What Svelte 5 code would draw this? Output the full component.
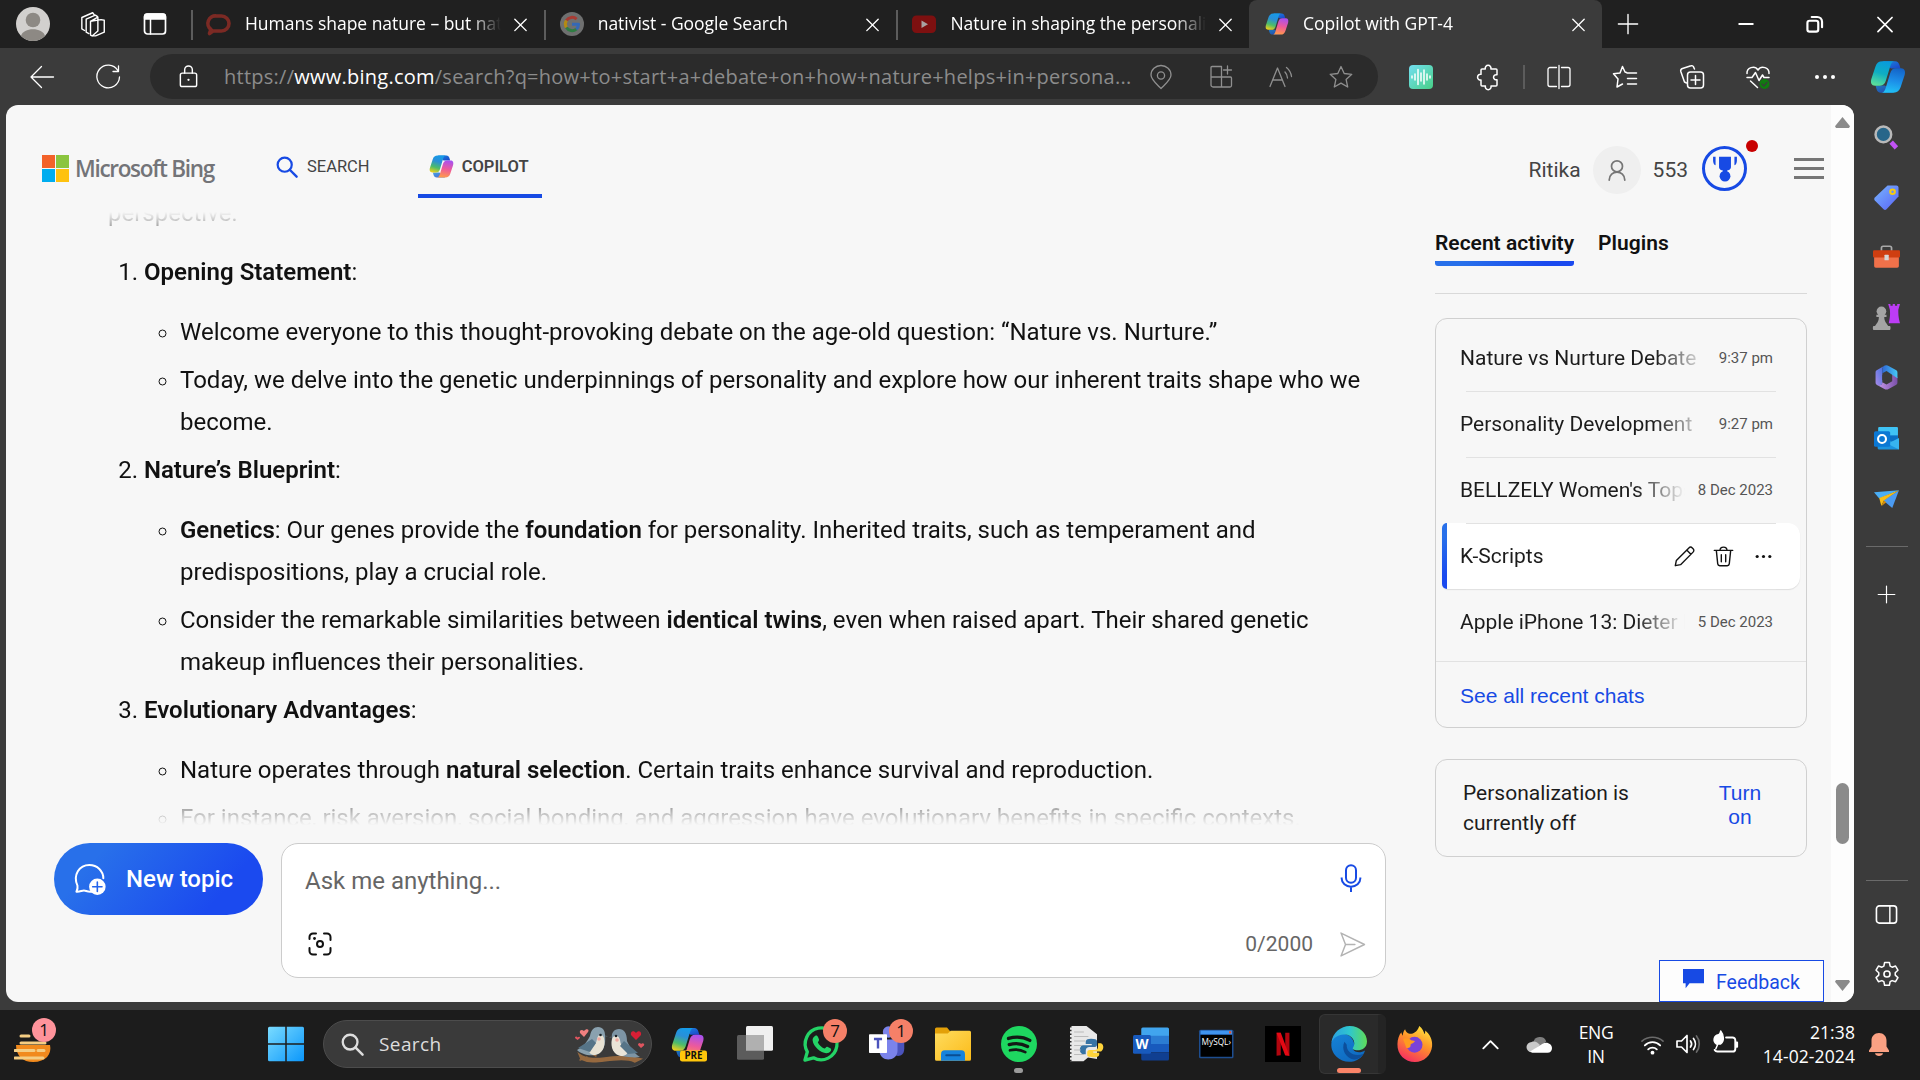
<script>
  const tabs = [
    { title: 'Humans shape nature – but nature shapes us', icon: 'chat' },
    { title: 'nativist - Google Search', icon: 'google' },
    { title: 'Nature in shaping the personality', icon: 'youtube' },
    { title: 'Copilot with GPT-4', icon: 'copilot', active: true },
  ];
  const chats = [
    { title: 'Nature vs Nurture Debate', when: '9:37 pm' },
    { title: 'Personality Development', when: '9:27 pm' },
    { title: "BELLZELY Women's Tops", when: '8 Dec 2023' },
    { title: 'K-Scripts', selected: true },
    { title: 'Apple iPhone 13: Dieter Bohn', when: '5 Dec 2023' },
  ];
  const addressIcons = ['pin', 'apps', 'read', 'star'];
  const toolIcons = ['split', 'favorites', 'collections', 'health', 'dots'];
  const sideIcons = ['lens', 'tag', 'toolbox', 'games', 'm365', 'outlook', 'drop'];
  const taskIcons = [
    { name: 'copilotpre' },
    { name: 'taskview' },
    { name: 'whatsapp', badge: '7' },
    { name: 'teams', badge: '1' },
    { name: 'folder' },
    { name: 'spotify', dot: true },
    { name: 'python' },
    { name: 'word' },
    { name: 'mysql' },
    { name: 'netflix' },
    { name: 'edge', active: true },
    { name: 'firefox' },
  ];
</script>

{#snippet ribbon(a, b, c)}
  <path fill="url(#{c})" d="M8.500 1.500h8.200c1.600 0 2.500 1 2.900 2.400l.7 2.400H14z" />
  <path fill="url(#{c})" d="M15.500 22.500H7.300c-1.600 0-2.500-1-2.900-2.400l-.7-2.400H10z" opacity=".8" />
  <path fill="url(#{a})" d="M8.300 1.500h7.900c-1.600.2-2.200 1.600-2.700 3.300l-2.900 9.600c-.7 2.200-1.700 3.400-4 3.400H3.400C.9 17.800.2 15.800.9 13.300L3.600 5.100C4.400 2.700 5.800 1.500 8.300 1.500z" />
  <path fill="url(#{b})" d="M15.700 22.500H7.800c1.600-.2 2.200-1.600 2.700-3.300l2.900-9.600c.7-2.200 1.700-3.400 4-3.400h3.200c2.500 0 3.200 2 2.500 4.500l-2.700 8.200c-.8 2.400-2.200 3.600-4.700 3.600z" />
{/snippet}

{#snippet icon(name, size = 24)}
  <svg class="icon" width={size} height={size} viewBox="0 0 24 24" fill="none" stroke="currentColor" stroke-width="1.3" stroke-linecap="round" stroke-linejoin="round" aria-hidden="true">
    {#if name === 'copilot'}
      <g stroke="none">{@render ribbon('gCool', 'gWarm', 'gDeep')}</g>
    {:else if name === 'copilotblue'}
      <g stroke="none">{@render ribbon('gTeal', 'gSky', 'gDeep')}</g>
    {:else if name === 'copilotpre'}
      <g stroke="none">
        <g transform="scale(.93)">{@render ribbon('gCool', 'gWarm', 'gDeep')}</g>
        <rect x="6" y="16.300" width="18" height="7.400" rx="1.500" fill="#ffc60b" />
        <text x="15" y="22.300" class="pre" text-anchor="middle">PRE</text>
      </g>
    {:else if name === 'chat'}
      <path stroke="#7c2a24" stroke-width="3.600" d="M9.500 4h5a7.500 7.500 0 0 1 0 15H6l-3.500 2.500L4 17.500A7.500 7.500 0 0 1 9.500 4z" />
    {:else if name === 'google'}
      <g stroke="none"><circle cx="12" cy="12" r="12" fill="#6f7070" /></g>
      <g stroke-width="3" stroke-linecap="butt">
        <path stroke="#a93b33" d="M6.400 8.500A6.600 6.600 0 0 1 16.600 7.200" />
        <path stroke="#b48a12" d="M6.400 15.500a6.600 6.600 0 0 1 0-7" />
        <path stroke="#2f7d43" d="M16.300 17.100a6.600 6.600 0 0 1-9.900-1.600" />
        <path stroke="#3568b5" d="M12 12.200h6.600a6.600 6.600 0 0 1-2.300 4.900" />
      </g>
    {:else if name === 'youtube'}
      <rect x="0" y="3.500" width="24" height="17.500" rx="4.500" fill="#7d1010" stroke="none" />
      <path d="M9.500 8.500l6.500 3.700-6.500 3.700z" fill="#a9a2a2" stroke="none" />
    {:else if name === 'close'}
      <path stroke-width="1.600" d="M5.500 6l13 13M18.500 6l-13 13" />
    {:else if name === 'plus'}
      <path d="M12 1.500v21M1.500 12h21" stroke-width="1.500" />
    {:else if name === 'workspaces'}
      <path d="M10.500 9.500l6.800-3.800v12.800l-5.300 4.500-1.500-.8zM10.500 9.500l9.700-1.500 3 .5v11l-8 3.500H13M17 5.200l-2-1.400L6.500 7.500v12l2.500 1.300M14 3.600l-1.500-2L2.500 6v10.500L5 18" transform="translate(-.8)" />
    {:else if name === 'tabaction'}
      <rect x="1.500" y="2" width="21" height="20" rx="3" stroke-width="1.700" />
      <path d="M1.500 7V4.500A2.500 2.500 0 0 1 4 2h16a2.500 2.500 0 0 1 2.500 2.500V7z" fill="#fff" />
      <path d="M7.500 7v15" stroke-width="1.500" />
    {:else if name === 'min'}
      <path d="M4.500 12h15" stroke-width="2" stroke-linecap="butt" />
    {:else if name === 'restore'}
      <rect x="5" y="9" width="10" height="10" rx="2" stroke-width="2" /><path d="M9 5.500h5a4.500 4.500 0 0 1 4.500 4.500v5" stroke-width="2" />
    {:else if name === 'back'}
      <path d="M23.500 12H1M11.500 1.500L1 12l10.500 10.500" />
    {:else if name === 'refresh'}
      <path d="M21.800 5.500A11.300 11.300 0 1 0 23.500 12M22.500 1v5.500H17" />
    {:else if name === 'lock'}
      <rect x="3.500" y="8.500" width="17" height="14" rx="2" stroke-width="1.500" /><path d="M8 8.500V5a4 4 0 0 1 8 0v3.500" stroke-width="1.500" /><circle cx="12" cy="15.500" r="1.200" fill="currentColor" stroke="none" />
    {:else if name === 'pin'}
      <path d="M12 23.500C7 18.500 2 14.500 2 10a10 9.500 0 0 1 20 0c0 4.500-5 8.500-10 13.500z" /><circle cx="12" cy="10.500" r="3.600" />
    {:else if name === 'apps'}
      <path d="M3 1.500h9.500V22H4a2 2 0 0 1-2-2V2.500a1 1 0 0 1 1-1zM2 12h19.500a1 1 0 0 1 1 1v7.500a1.500 1.500 0 0 1-1.500 1.500h-8.500M18.500 1v8M14.500 5h8" />
    {:else if name === 'read'}
      <path d="M1 21.500L8.500 3 16 21.500M4 15h9M16 7a9 9 0 0 1 2.500 6M17.500 2.500a14 14 0 0 1 5 9" />
    {:else if name === 'star'}
      <path d="M12 1.500l3.200 7 7.600.8-5.700 5.100 1.600 7.600-6.700-3.900L5.300 22l1.600-7.600-5.700-5.100 7.600-.8z" />
    {:else if name === 'wave'}
      <rect x="0" y="0" width="24" height="24" rx="4" fill="url(#gWave)" stroke="none" />
      <path stroke="#fff" stroke-width="1.500" d="M3 11v2M6 9v6M9 4.500v15M12 8v8M15 5v14M18 9v6M21 11v2" />
    {:else if name === 'puzzle'}
      <path stroke-width="1.500" d="M6 4h3.300a2.900 2.900 0 1 1 5.600 0H20c.6 0 1 .4 1 1v4.800a2.600 2.600 0 1 0 0 4.900v5.300c0 .6-.4 1-1 1h-5a2.900 2.900 0 1 1-5.600 0H6c-.6 0-1-.4-1-1v-5a2.900 2.900 0 1 1 0-5.700V5c0-.6.4-1 1-1z" />
    {:else if name === 'split'}
      <path d="M9.500 2.500H3a2 2 0 0 0-2 2v15a2 2 0 0 0 2 2h6.500M14.500 2.500H21a2 2 0 0 1 2 2v15a2 2 0 0 1-2 2h-6.500M12 .5v23" />
    {:else if name === 'favorites'}
      <path stroke-width="1.500" d="M13.500 7.500L12 7 9.500 1.500 7 8l-6.500.8L5 14l-1 8 5.500-3M14 8h9.500M14.500 13.500h9M14.500 19h9" />
    {:else if name === 'collections'}
      <path stroke-width="1.500" d="M6.500 18L4.500 17 .8 6.500A2.500 2.500 0 0 1 2.500 3.500L11 .8a2 2 0 0 1 2.600 1.300L14.500 4" /><rect x="7.500" y="7" width="16" height="16" rx="3" stroke-width="1.500" /><path stroke-width="1.500" d="M15.500 10.500v9M11 15h9" />
    {:else if name === 'health'}
      <path stroke-width="1.500" d="M1 8.500C.5 3 8.500-.5 12 5c3.500-5.500 11.500-2 11 3.500M1 12.500h5l3.500-5 3.500 8 3.500-5.500 1.500 2.500h5M4.500 16l7 6.500" /><circle cx="18.500" cy="19" r="5" fill="#107c10" stroke="none" /><path d="M16 19l2 2 3-3.500" stroke="#3b3b3b" />
    {:else if name === 'dots'}
      <g fill="currentColor" stroke="none"><circle cx="4" cy="12" r="2" /><circle cx="12" cy="12" r="2" /><circle cx="20" cy="12" r="2" /></g>
    {:else if name === 'lens'}
      <path d="M16.500 16.500l5 5.500" stroke="#c153f5" stroke-width="4.500" stroke-linecap="butt" /><circle cx="9" cy="9" r="7.500" fill="#27668a" stroke="#b9b9b9" stroke-width="2.400" />
    {:else if name === 'tag'}
      <path d="M13 .5h8.500a2 2 0 0 1 2 2V11L12 23.300a2 2 0 0 1-2.800 0L.8 14.800a2 2 0 0 1 0-2.800z" fill="url(#gTag)" stroke="none" /><circle cx="17.800" cy="6.500" r="2.200" stroke="#f5cb13" stroke-width="2" />
    {:else if name === 'toolbox'}
      <path d="M7.500 6V3.500A1.500 1.500 0 0 1 9 2h6a1.500 1.500 0 0 1 1.500 1.500V6" stroke="#a9a9a9" stroke-width="1.500" /><rect x="1" y="8" width="22" height="13" rx="1.500" fill="#f0714a" stroke="none" /><rect x="0" y="5.500" width="24" height="6.500" rx="1" fill="#cf3e11" stroke="none" /><rect x="10.200" y="9.500" width="3.800" height="5" rx=".5" fill="#d5d5d5" stroke="none" />
    {:else if name === 'games'}
      <g stroke="none"><g fill="#a4a4a4"><circle cx="7.500" cy="6.500" r="4.300" /><path d="M3 9.500h9v2H10c0 4 2 5.500 3.500 8H15c.8 0 .8 3.500 0 3.500H.5c-.8 0-.8-3.500 0-3.500h1.300C3.500 17 5.200 15.500 5.200 11.500H3z" /></g><path fill="#bc3cf6" d="M13.500 0h2v1.500h2V0h2v1.500h2V0H24l-1.500 5c0 4 0 6 1.500 12H14c1.300-6 1.300-8 1-12z" /></g>
    {:else if name === 'm365'}
      <g stroke="none"><path fill="url(#gLilac)" d="M22.500 11.500v5c0 1.300-.4 2-1.500 2.600l-7 4c-1.300.7-2.700.7-4 0l-7-4c3 1 5-.3 5-2.600l4 2.300 5.500-3.300V8.500z" /><path fill="url(#gIndigo)" d="M10 .8L3 4.800C1.800 5.500 1.500 6 1.500 7.500v9c0 1.300.4 2 1.500 2.600 2.500 1.300 5 .2 5-2.600V4.500c0-1.700.7-3 2-3.700z" /><path fill="url(#gCyan)" d="M12 .3c-2.500 0-4 2-4 4.200V8l4-2.200 10.500 7V7.500c0-1.300-.4-2-1.500-2.600l-7-4Q13 .3 12 .3z" /></g><path fill="#3b3b3b" stroke="none" d="M12 7.500l4 2.200v4.600l-4 2.200-4-2.200V9.700z" />
    {:else if name === 'outlook'}
      <g stroke="none"><rect x="4" y="1" width="19" height="14" rx="1" fill="#3fc3f5" /><path fill="#0a6fc4" d="M12 9h11v6H12z" /><path fill="#1b93df" d="M3.500 15l10-3 10.500 10.500H5A1.500 1.500 0 0 1 3.500 21z" /><path fill="#37b4f0" d="M24 11.500v11L13 17z" /><rect x="0" y="5" width="15.500" height="15" rx="1.500" fill="#0b78d4" /></g><circle cx="7.700" cy="12.500" r="3.800" stroke="#fff" stroke-width="2" />
    {:else if name === 'drop'}
      <g stroke="none"><path fill="#4aaef5" d="M0 6l24-2L5 12z" /><path fill="#4b9bf2" d="M9 14L24 4l-6.500 17z" /><path fill="#f8bd14" d="M24 4L5 11.500 7 19l2.500-5z" /><path fill="#d48c0a" d="M7 19.500l2.500-5.500 2.300 1.500z" /></g>
    {:else if name === 'panel'}
      <rect x="1.500" y="3" width="21" height="18" rx="3" stroke-width="1.700" /><path d="M15.500 3v18" stroke-width="1.500" />
    {:else if name === 'gear'}
      <path stroke-width="1.400" d="M9.800 1h4.400l.7 3.300 1.800 1 3.200-1 2.200 3.800-2.500 2.300v2.200l2.500 2.300-2.200 3.800-3.200-1-1.800 1-.7 3.300H9.800l-.7-3.300-1.800-1-3.200 1-2.200-3.800 2.500-2.300v-2.200L1.900 8.100l2.200-3.800 3.200 1 1.800-1z" transform="translate(0 .4)" /><circle cx="12" cy="12" r="2.800" stroke-width="1.500" />
    {:else if name === 'search'}
      <circle cx="9.500" cy="9.500" r="7.700" stroke-width="2.400" /><path d="M15 15l7.500 7.500" stroke-width="2.600" />
    {:else if name === 'user'}
      <circle cx="12" cy="8" r="6" stroke-width="1.900" /><path stroke-width="1.900" d="M3.500 23c0-11.500 17-11.500 17 0" />
    {:else if name === 'medal'}
      <g stroke="none" fill="currentColor"><path d="M6.500 1.500h11V11c0 2.500-3 3.500-5.500 3.500S6.500 13.500 6.500 11zM1 1.500h2.300V9.500C1.700 9 1 7 1 5zM20.700 1.500H23V5c0 2-.7 4-2.300 4.500zM10 13h4v4h-4z" /><circle cx="12" cy="19.500" r="5" /></g>
    {:else if name === 'pencil'}
      <path stroke-width="1.600" d="M1.500 22.500l1.200-6L17 2.200c1.200-1.200 2.800-1.100 3.900 0l.9.900c1.100 1.100 1.200 2.700 0 3.900L7.500 21.300zM14.500 4.700l4.800 4.800" />
    {:else if name === 'trash'}
      <path stroke-width="1.600" d="M1.500 5h21M8 5c0-5 8-5 8 0M3.800 5l1.600 15.500c.2 1.500 1 2 2.300 2h8.600c1.300 0 2.100-.5 2.300-2L20.200 5M9.500 10v8M14.500 10v8" />
    {:else if name === 'mic'}
      <rect x="7.700" y="1" width="8.600" height="15" rx="4.300" stroke-width="1.700" /><path stroke-width="1.700" stroke-linecap="butt" d="M4 11.500v1a8 7 0 0 0 16 0v-1M12 19.500V24" />
    {:else if name === 'send'}
      <path stroke-width="1.400" d="M1 1l22.500 11L1 23l4.300-11zM5.300 12h9" />
    {:else if name === 'visual'}
      <path stroke-width="2" d="M1.500 7V5A3.500 3.500 0 0 1 5 1.500h3M16 1.500h3A3.500 3.500 0 0 1 22.500 5v3M22.500 16v3a3.500 3.500 0 0 1-3.500 3.500h-3M8 22.500H5A3.500 3.500 0 0 1 1.500 19v-3" /><circle cx="12" cy="12" r="3" stroke-width="2" /><circle cx="6.500" cy="6.500" r="1.400" fill="currentColor" stroke="none" />
    {:else if name === 'newtopic'}
      <path stroke-width="1.500" d="M13 21.500c-3 .3-4-.8-5.500-.8-1.800 0-3 1-5.700.8.800-1.500 1.200-2.500.8-4.500C-1 9 4 1.500 11.500 1.500c6 0 10.500 4.500 10.500 10" /><circle cx="17.500" cy="17.800" r="6.200" fill="#fff" stroke="none" /><path stroke="#2464ec" d="M17.500 14.300v7M14 17.800h7" stroke-width="1.200" />
    {:else if name === 'speech'}
      <path d="M0 1h24v16.500H7.500L3 23v-5.500H0z" fill="currentColor" stroke="none" />
    {:else if name === 'windows'}
      <g stroke="none" fill="url(#gWin)"><path d="M0 1.500A1 1 0 0 1 1 .5h10.500v11H0z" /><path d="M12.500.5H23a1 1 0 0 1 1 1v10H12.500z" /><path d="M0 12.500h11.500v11H1a1 1 0 0 1-1-1z" /><path d="M12.500 12.500H24v10a1 1 0 0 1-1 1H12.500z" /></g>
    {:else if name === 'taskview'}
      <g stroke="none"><rect x="6" y="0" width="18" height="16.500" rx="1" fill="#f0f0f0" /><rect x="0" y="6" width="18" height="16.500" rx="1" fill="#5c5c5c" /><rect x="6" y="6" width="12" height="10.500" fill="#b0b0b0" /></g>
    {:else if name === 'whatsapp'}
      <path stroke="#24d366" stroke-width="2.200" d="M1.300 22.700l1.600-5.500A10.600 10.600 0 1 1 7 21.200z" /><path fill="#24d366" stroke="none" d="M8.200 6.500c.8-.6 1.500 0 1.800.8l.7 1.700c.3.800-.9 1.500-.8 2 1 1.900 2.400 3.200 4.300 4 .7.100 1.200-1.500 2-1.200l2 1c.8.400.6 1.200.3 1.800-3 4.300-11.500-1.500-12.100-7.100-.1-1.300.6-2.200 1.800-3z" />
    {:else if name === 'teams'}
      <g stroke="none"><circle cx="13" cy="4" r="3.800" fill="#7b83eb" /><circle cx="20" cy="5.500" r="2.700" fill="#5059c9" /><path fill="#4b53bc" d="M15 9h8.500v6c0 6-6 6-7.500 3z" /><path fill="#7b83eb" d="M7 9h12v7.500c0 7.500-12 8-12 0z" /><rect x="0" y="5.500" width="12" height="12.500" rx=".5" fill="#fff" /></g><path stroke="#4b53bc" stroke-width="1.600" stroke-linecap="butt" d="M3.300 8.700h5.400M6 8.700V15" />
    {:else if name === 'folder'}
      <g stroke="none"><path fill="#e3a008" d="M0 2a1 1 0 0 1 1-1h7l2.500 3H12v4H0z" /><path fill="url(#gFolder)" d="M0 5h8.500l2-1.800H23a1 1 0 0 1 1 1v18a1 1 0 0 1-1 1H1a1 1 0 0 1-1-1z" /><path fill="#1683dc" d="M4 23.200V19c0-2 .8-2.800 2.500-2.800h11c1.700 0 2.500.8 2.500 2.800v4.200z" /></g><path stroke="#0a4d92" d="M7.500 19.500h9" />
    {:else if name === 'spotify'}
      <circle cx="12" cy="12" r="12" fill="#1ed760" stroke="none" /><path stroke="#131a15" stroke-width="2.200" d="M5 8.300c4.800-1.400 10-1 14.200 1.300M5.500 12.400c4.200-1.200 8.500-.7 12.200 1.300" /><path stroke="#131a15" stroke-width="1.800" d="M6 16.200c3.500-.9 7-.5 10.200 1.200" />
    {:else if name === 'python'}
      <g stroke="none"><path fill="#e8e8e8" d="M2 0h11l7 5.500V22l-6-1-3 2.500H2z" /><path fill="#3673a5" d="M16 8.500c-4 0-3.500 2-3.500 3.500h4v.8H10c-2 1.500-2 5 .5 6h2v-2.500c0-1.500 1-2.300 2.500-2.300h3.500c1 0 1.500-.8 1.500-1.700V10c0-1-1.500-1.500-4-1.500z" /><path fill="#ffd43b" d="M18 20.800c4 0 3.500-1.800 3.500-3h-4V17h5.200c2-1.500 2-4.500 0-5.500h-2v2.300c0 1.500-1 2.200-2.200 2.200H15c-1 0-1.500.8-1.500 1.500v2c0 1 2 1.300 4.500 1.300z" /></g><path stroke="#222" stroke-dasharray="1 1.500" stroke-width="1" stroke-linecap="butt" d="M2.500 0v23.500" /><path stroke="#b5b5b5" stroke-width=".6" d="M5 4h6M5 7h9M5 10h7M5 13h5M5 16h4M5 19h6" />
    {:else if name === 'word'}
      <g stroke="none"><path fill="#41a5ee" d="M5.500 2a1 1 0 0 1 1-1H23a1 1 0 0 1 1 1v5H5.500z" /><path fill="#2b7cd3" d="M5.500 6.500H24V12H5.500z" /><path fill="#185abd" d="M5.500 12H24v5.500H5.500z" /><path fill="#103f91" d="M5.500 17.500H24V22a1 1 0 0 1-1 1H6.500a1 1 0 0 1-1-1z" /><rect y="6" width="12" height="12.500" rx="1" fill="#185abd" /><text x="6" y="15.500" class="wordmark" text-anchor="middle">W</text></g>
    {:else if name === 'mysql'}
      <g stroke="none"><rect x="0" y="2.500" width="23" height="19" rx="1" fill="#1d4d8f" /><rect x="1" y="6" width="21" height="14.500" fill="#000" /><path fill="#3f93ee" d="M1 3h21v2.500H1z" /><path fill="#e3532e" d="M20 3.500h1.500V5H20z" /><text x="11.500" y="12.500" class="console" text-anchor="middle">MySQL›</text></g>
    {:else if name === 'netflix'}
      <g stroke="none"><rect width="24" height="24" fill="#000" /><path fill="#b1060f" d="M7.700 4.500h2.800v15l-2.800.3zM13.500 4.500h2.800v15.300l-2.800-.3z" /><path fill="#e50914" d="M7.700 4.500h2.800l5.800 15.300-2.900-.3z" /></g>
    {:else if name === 'edge'}
      <g stroke="none"><path fill="url(#gEdgeB)" d="M.5 10C3 3 14 3.500 15.500 12c.3 2-1 2.500-.8 3.500.8 2 5 2.800 8 .8C20 25 9 26 3.500 20.300.6 17.300-.3 13.800.5 10z" /><path fill="url(#gEdgeG)" d="M.3 11C1 4.500 6.500 0 12.500 0 19 0 24 5 24 10.200c0 4.500-3.300 6-6.300 6-2.500 0-3.700-.9-3-1.900 2.600-3.500-1-9-6.200-8.600C4.500 6 1.500 8 .3 11z" /><path fill="#0c4f9c" d="M9 10.500c-2.500 5 .8 11 6.300 11.800 2.300.3 4.700-1.300 6.500-3.800-6 2.500-11.800-1-11.300-6z" /></g>
    {:else if name === 'firefox'}
      <g stroke="none"><path fill="url(#gFox)" d="M14.800 0c2 1.500 3.200 3.700 3.500 5.500.5-.8.6-1.700.5-2.500 3 2.500 5 6 4.600 10.500C22.800 19.500 18 24 12 24 5.200 24 0 19 .3 12c.1-3 1-6 2.600-7.800.2 1.200.6 1.800 1 2.300 0-1.800.6-3.200 1.500-4.300.4 1.800 1.500 2.700 3 3C10.500 5.500 13.700 4 14.800 0z" /><circle cx="11.700" cy="12.500" r="5.300" fill="#7a42d8" /><path fill="#ff9a1f" d="M4 8.500c2.500-.8 4.500-.3 5.500 1l2.500.5c-.5 1.500-2.500 1.500-3 2.500.5 1.500-1 2.500-2.800 2z" /></g>
    {:else if name === 'chevron'}
      <path stroke-width="2" d="M4.500 16l7.500-7.500 7.500 7.500" />
    {:else if name === 'cloud'}
      <g stroke="none"><path fill="#7f7f7f" d="M6 10a6.500 6.500 0 0 1 12.500-1l-8 7z" /><path fill="#c9c9c9" d="M4.500 19.500a5 5 0 0 1 0-10c3.500-1 6 1 8 3z" /><path fill="#fff" d="M3 18.800l12-7.500c4-2.500 9 .2 9 4.300 0 2.400-1.700 4.400-4.300 4.400H5z" /></g>
    {:else if name === 'wifi'}
      <path stroke-width="1.700" stroke="#6a6a6a" d="M1 8.500a16 15 0 0 1 22 0" /><path stroke-width="1.900" d="M4 13a11 11 0 0 1 16 0M7.500 17a6.500 6.500 0 0 1 9 0" /><circle cx="12" cy="20.500" r="2" fill="currentColor" stroke="none" />
    {:else if name === 'sound'}
      <path stroke-width="1.700" d="M1 9h4.500L11 3.500v17L5.500 15H1zM14.500 9a5 5 0 0 1 0 6" /><path stroke-width="1.700" d="M17.500 6.500a9 9 0 0 1 0 11" /><path stroke="#6a6a6a" stroke-width="1.700" d="M20.500 4a13 13 0 0 1 0 16" />
    {:else if name === 'battery'}
      <path stroke-width="1.800" d="M13 6h6a2.500 2.500 0 0 1 2.500 2.500v8A2.500 2.500 0 0 1 19 19H5a3 3 0 0 1-2.500-1.500M21.500 10.500h1.700v4h-1.700" /><path fill="currentColor" d="M8 0c3.200 4 3.500 9.500 0 12H4C.5 9 1.500 4.500 6 3.500 7.300 2.800 7.800 1.500 8 0zM3.500 16.500l3-7" />
    {:else if name === 'bell'}
      <path fill="#fba183" stroke="none" d="M12 1c4.500 0 7.500 3.200 7.500 7.500v6l2.500 4V20H2v-1.500l2.500-4v-6C4.500 4.200 7.500 1 12 1zM8 21.300h8c-.5 3.600-7.500 3.600-8 0z" />
    {/if}
  </svg>
{/snippet}

<svg class="defs" width="0" height="0" aria-hidden="true">
  <defs>
    <linearGradient id="gCool" x1=".6" y1="0" x2=".3" y2="1"><stop offset="0" stop-color="#159be8" /><stop offset=".35" stop-color="#2a8fd8" /><stop offset=".7" stop-color="#4cbc6a" /><stop offset="1" stop-color="#e8cf1f" /></linearGradient>
    <linearGradient id="gWarm" x1=".6" y1="0" x2=".4" y2="1"><stop offset="0" stop-color="#a850f0" /><stop offset=".5" stop-color="#ee5a9a" /><stop offset="1" stop-color="#ff9a4a" /></linearGradient>
    <linearGradient id="gDeep" x1="0" y1="0" x2="1" y2="1"><stop offset="0" stop-color="#1a8ae0" /><stop offset="1" stop-color="#1c43c9" /></linearGradient>
    <linearGradient id="gTeal" x1=".6" y1="0" x2=".3" y2="1"><stop offset="0" stop-color="#089bdc" /><stop offset=".5" stop-color="#0faec2" /><stop offset="1" stop-color="#5be09a" /></linearGradient>
    <linearGradient id="gSky" x1=".6" y1="0" x2=".4" y2="1"><stop offset="0" stop-color="#1464c8" /><stop offset=".5" stop-color="#1c8de8" /><stop offset="1" stop-color="#21c1f5" /></linearGradient>
    <linearGradient id="gWave" x1="0" y1="0" x2="1" y2="1"><stop offset="0" stop-color="#73dff2" /><stop offset="1" stop-color="#48cf86" /></linearGradient>
    <linearGradient id="gTag" x1="0" y1="0" x2="1" y2="1"><stop offset="0" stop-color="#77b5ff" /><stop offset="1" stop-color="#5a63f5" /></linearGradient>
    <linearGradient id="gIndigo" x1="1" y1="0" x2="0" y2="1"><stop offset="0" stop-color="#3a6fe0" /><stop offset="1" stop-color="#a88ae8" /></linearGradient>
    <linearGradient id="gCyan"><stop offset="0" stop-color="#2f68d6" /><stop offset="1" stop-color="#45c8f5" /></linearGradient>
    <linearGradient id="gLilac"><stop offset="0" stop-color="#c99bec" /><stop offset="1" stop-color="#7a4fa8" /></linearGradient>
    <linearGradient id="gWin" gradientUnits="userSpaceOnUse" x1="0" y1="0" x2="24" y2="24"><stop offset="0" stop-color="#7bdcff" /><stop offset="1" stop-color="#0a96fb" /></linearGradient>
    <linearGradient id="gFolder" x1="0" y1="0" x2="1" y2="1"><stop offset="0" stop-color="#ffdc5e" /><stop offset="1" stop-color="#fbbb19" /></linearGradient>
    <linearGradient id="gEdgeB" x1="0" y1="0" x2=".6" y2="1"><stop offset="0" stop-color="#1583d8" /><stop offset="1" stop-color="#0f6ac0" /></linearGradient>
    <linearGradient id="gEdgeG"><stop offset="0" stop-color="#2b9fe0" /><stop offset=".5" stop-color="#2ec6d0" /><stop offset="1" stop-color="#5fdc58" /></linearGradient>
    <linearGradient id="gFox" x1=".8" y1="0" x2=".3" y2="1"><stop offset="0" stop-color="#ffe83f" /><stop offset=".45" stop-color="#ff9429" /><stop offset="1" stop-color="#f52d62" /></linearGradient>
  </defs>
</svg>

<div class="desktop">
  <header class="tabbar">
    <div class="profile">
      <svg width="34" height="34" viewBox="0 0 34 34"><circle cx="17" cy="17" r="17" fill="#d2d0ce" /><circle cx="17" cy="13" r="7.300" fill="#8d8984" /><path d="M5 29c2-9 22-9 24 0a17 17 0 0 1-24 0z" fill="#8d8984" /></svg>
      {@render icon('workspaces', 26)}
      {@render icon('tabaction')}
    </div>
    {#each tabs as tab}
      <div class="tab" class:active={tab.active}>
        {@render icon(tab.icon)}
        <span class="tabtitle">{tab.title}</span>
        {@render icon('close', 21)}
      </div>
    {/each}
    <div class="newtab">{@render icon('plus', 22)}</div>
    <div class="winbtns">{@render icon('min')}{@render icon('restore', 26)}{@render icon('close', 26)}</div>
  </header>

  <div class="toolbar">
    <div class="nav">{@render icon('back')}{@render icon('refresh')}</div>
    <div class="address">
      {@render icon('lock', 23)}
      <span class="url">https://<b>www.bing.com</b>/search?q=how+to+start+a+debate+on+how+nature+helps+in+persona...</span>
      <div class="addressicons">
        {#each addressIcons as name}<span>{@render icon(name)}</span>{/each}
      </div>
    </div>
    <div class="tools">
      <span>{@render icon('wave')}</span>
      <span>{@render icon('puzzle')}</span>
      <i></i>
      {#each toolIcons as name}<span>{@render icon(name)}</span>{/each}
      <span class="copilotbtn">{@render icon('copilotblue', 36)}</span>
    </div>
  </div>

  <div class="middle">
    <div class="page">
      <div class="body">
        <div class="pagehead">
          <div class="logo"><i></i><i></i><i></i><i></i></div>
          <span class="brand">Microsoft Bing</span>
          <div class="scope">{@render icon('search', 22)}<span>SEARCH</span></div>
          <div class="scope current">{@render icon('copilot', 25)}<span>COPILOT</span></div>
          <div class="account">
            <span>Ritika</span>
            <div class="avatar">{@render icon('user', 22)}</div>
            <span>553</span>
            <div class="medal">{@render icon('medal', 26)}<b></b></div>
            <div class="burger"><i></i><i></i><i></i></div>
          </div>
        </div>

        <div class="columns">
          <main>
            <div class="thread">
              <p>perspective:</p>
              <ol>
                <li><strong>Opening Statement</strong>:
                  <ul>
                    <li>Welcome everyone to this thought-provoking debate on the age-old question: “Nature vs. Nurture.”</li>
                    <li>Today, we delve into the genetic underpinnings of personality and explore how our inherent traits shape who we become.</li>
                  </ul>
                </li>
                <li><strong>Nature’s Blueprint</strong>:
                  <ul>
                    <li><strong>Genetics</strong>: Our genes provide the <strong>foundation</strong> for personality. Inherited traits, such as temperament and predispositions, play a crucial role.</li>
                    <li>Consider the remarkable similarities between <strong>identical twins</strong>, even when raised apart. Their shared genetic makeup influences their personalities.</li>
                  </ul>
                </li>
                <li><strong>Evolutionary Advantages</strong>:
                  <ul>
                    <li>Nature operates through <strong>natural selection</strong>. Certain traits enhance survival and reproduction.</li>
                    <li>For instance, risk aversion, social bonding, and aggression have evolutionary benefits in specific contexts.</li>
                  </ul>
                </li>
              </ol>
            </div>
            <div class="composer">
              <button class="newtopic">{@render icon('newtopic', 32)}<span>New topic</span></button>
              <div class="ask">
                <div class="askrow"><span>Ask me anything...</span><em class="mic">{@render icon('mic', 28)}</em></div>
                <div class="askrow low"><em>{@render icon('visual', 24)}</em><span class="count">0/2000</span><em class="send">{@render icon('send', 25)}</em></div>
              </div>
            </div>
          </main>

          <aside>
            <div class="sidetabs"><span class="on">Recent activity</span><span>Plugins</span></div>
            <div class="card">
              {#each chats as chat}
                <div class="chat" class:selected={chat.selected}>
                  <div class="chatline">
                    <span class="chattitle">{chat.title}</span>
                    {#if chat.selected}
                      <span class="acts">{@render icon('pencil', 21)}{@render icon('trash', 21)}{@render icon('dots', 19)}</span>
                    {:else}
                      <time>{chat.when}</time>
                    {/if}
                  </div>
                </div>
              {/each}
              <a class="seeall" href="#chats">See all recent chats</a>
            </div>
            <div class="card personal">
              <span>Personalization is currently off</span>
              <a href="#on">Turn on</a>
            </div>
            <button class="feedback">{@render icon('speech', 21)}<span>Feedback</span></button>
          </aside>
        </div>
      </div>
      <div class="scrollbar"><i class="up"></i><i class="thumb"></i><i class="down"></i></div>
    </div>

    <div class="rail">
      {#each sideIcons as name}<span>{@render icon(name, name === 'games' || name === 'toolbox' ? 27 : 25)}</span>{/each}
      <hr />
      <span class="add">{@render icon('plus', 19)}</span>
      <hr />
      <span>{@render icon('panel', 23)}</span>
      <span>{@render icon('gear', 26)}</span>
    </div>
  </div>

  <footer class="taskbar">
    <div class="widgets">
      <svg width="40" height="48" viewBox="0 0 40 48"><path d="M2 25h34c2 9-4 17-17 17C9 42 2 36 2 25z" fill="#f18a1d" /><path d="M7 16h8M7 23h24M1 30.500h19M24 30.500h6M1 38h28" stroke="#f4cd83" stroke-width="3" stroke-linecap="round" /></svg>
      <b>1</b>
    </div>
    <div class="start">{@render icon('windows', 36)}</div>
    <div class="tasksearch">
      {@render icon('search', 23)}
      <span>Search</span>
      <svg class="birds" width="71" height="37" viewBox="0 0 71 37">
        <path d="M5 28c10 7 22 4 34 3 10-1 18-1 28 2l-6 3c-6-3-12-3-22-2-12 1-22 4-32-1zM13 31l-7 3M22 30l-7-4" fill="#96693f" stroke="#96693f" stroke-width="1.500" stroke-linecap="round" />
        <path d="M3 24c6-3 10-8 13-14C17 4 20 1 24 1c5 0 7 4 7 8 1 9-1 18-10 20-7 1-14-1-18-5z" fill="#8aa1af" />
        <path d="M30 12c2 9-2 16-9 17-4 0-6-2-6-5 3-3 7-4 8-11 1-5 5-6 7-1z" fill="#e8e2d3" />
        <path d="M66 31c-5-3-10-9-13-16 0-8-3-12-8-12-5 0-8 4-7 9-1 9 1 16 9 18 7 1 14 2 19 1z" fill="#7d95a5" />
        <path d="M38 13c-2 9 2 16 9 17 4 0 7-2 6-4-3-3-6-5-7-12-1-5-6-6-8-1z" fill="#ebe5d8" />
        <path d="M4 22l14-9 4 4-6 9zM64 27L50 15l-4 5 8 8z" fill="#567487" />
        <path d="M10 11l-4-4c-1-3 2-4 4-2 2-3 6-2 4 1z" fill="#f08080" /><path d="M62 14l-5-5c-1-4 3-5 5-2 2-3 6-2 5 2z" fill="#d81f35" />
        <path d="M3.500 14L1 12c0-2 2-2 2.500-.5C5 10 7 11 5.500 12.500zM67 22l-3-3c0-2 2-3 3-1 2-2 4 0 3 1.500z" fill="#e0555f" />
        <circle cx="26.500" cy="9" r="1.300" fill="#1c2328" /><circle cx="42" cy="10" r="1.300" fill="#1c2328" />
        <circle cx="25" cy="13" r="1.800" fill="#f0a8a0" /><circle cx="43" cy="14" r="1.800" fill="#f0a8a0" /><path d="M31 9l3 1.500-3 1zM37.500 10L35 11.500l3 1z" fill="#4b5358" />
      </svg>
    </div>
    <div class="apps">
      {#each taskIcons as app}
        <div class="app" class:activeapp={app.active}>
          {@render icon(app.name, 36)}
          {#if app.badge}<b>{app.badge}</b>{/if}
          {#if app.dot}<u></u>{/if}
          {#if app.active}<u class="wide"></u>{/if}
        </div>
      {/each}
    </div>
    <div class="tray">
      {@render icon('chevron', 23)}
      {@render icon('cloud', 25)}
      <div class="lang">ENG<br />IN</div>
      <div class="status">{@render icon('wifi', 23)}{@render icon('sound', 24)}{@render icon('battery', 26)}</div>
      <div class="clock">21:38<br />14-02-2024</div>
      {@render icon('bell', 24)}
    </div>
  </footer>
</div>

<style>
  :global(body) { background: #1c1c1c; overflow: hidden; }
  .desktop { width: 1920px; height: 1080px; display: flex; flex-direction: column; background: #3b3b3b; font-family: 'Open Sans', 'Noto Sans', sans-serif; color: #fff; overflow: hidden; }
  .defs { position: absolute; }
  .icon { display: block; flex: none; overflow: visible; }
  button { border: 0; padding: 0; font: inherit; }
  a { text-decoration: none; }
  .pre { font: 700 6.500px 'Open Sans', sans-serif; fill: #111; }
  .wordmark { font: 700 9px 'Open Sans', sans-serif; fill: #fff; }
  .console { font: 5.500px 'Open Sans', sans-serif; fill: #fff; }

  .tabbar { height: 48px; background: #202020; display: flex; flex: none; }
  .profile { width: 191px; display: flex; align-items: center; padding-left: 16px; gap: 30px; box-sizing: border-box; }
  .profile .icon:last-child { margin-left: 7px; }
  .tab { width: 352.700px; display: flex; align-items: center; box-sizing: border-box; padding: 0 13px 0 16px; position: relative; }
  .tab::before { content: ''; position: absolute; left: 0; top: 10px; width: 2px; height: 30px; background: #5c5c5c; }
  .tab.active { background: #3b3b3b; border-radius: 8px 8px 0 0; }
  .tab.active::before { display: none; }
  .tabtitle { flex: 1; margin: 0 7px 0 14px; padding-bottom: 2px; font-size: 17.500px; letter-spacing: -.03px; white-space: nowrap; overflow: hidden; mask-image: linear-gradient(90deg, #000 225px, transparent 256px); }
  .newtab { display: flex; align-items: center; margin-left: 15px; width: 22px; padding-bottom: 1px; }
  .winbtns { margin-left: auto; display: flex; align-items: center; gap: 44px; padding: 0 22px 1px 0; }

  .toolbar { height: 57px; display: flex; align-items: center; flex: none; }
  .nav { display: flex; gap: 42px; width: 120px; padding-left: 30px; }
  .address { width: 1228px; height: 45px; border-radius: 23px; background: #2b2b2b; display: flex; align-items: center; padding-left: 27px; box-sizing: border-box; }
  .url { margin-left: 24px; width: 907px; white-space: nowrap; font-size: 20px; color: #8c8c8c; letter-spacing: .250px; }
  .url b { font-weight: 400; color: #fff; }
  .addressicons { display: flex; color: #8f8f8f; }
  .addressicons span { width: 60px; display: flex; justify-content: center; }
  .tools { display: flex; align-items: center; padding-left: 10px; }
  .tools span { width: 66.400px; display: flex; justify-content: center; }
  .tools i { width: 2px; height: 24px; background: #5c5c5c; margin: 0 1px 0 2px; }
  .tools .copilotbtn { width: 60px; }

  .middle { display: flex; flex: none; height: 905px; }
  .page { width: 1848px; height: 897px; margin-left: 6px; border-radius: 12px; overflow: hidden; background: #f7f7f7; display: flex; color: #111; font-family: Roboto, sans-serif; }
  .body { width: 1825px; display: flex; flex-direction: column; }
  .scrollbar { width: 23px; background: #fdfdfd; display: flex; flex-direction: column; align-items: center; }
  .up { width: 15px; height: 11px; margin-top: 12px; background: #8b8b8b; clip-path: polygon(50% 0, 100% 85%, 93% 100%, 7% 100%, 0 85%); }
  .thumb { width: 13px; height: 61px; border-radius: 7px; background: #8b8b8b; margin-top: 655px; }
  .down { width: 15px; height: 11px; margin-top: 136px; background: #8b8b8b; clip-path: polygon(50% 100%, 100% 15%, 93% 0, 7% 0, 0 15%); }

  .pagehead { height: 107px; flex: none; display: flex; padding-left: 36px; box-sizing: border-box; }
  .logo { display: grid; grid-template-columns: 13px 13px; grid-auto-rows: 13px; gap: 1px; height: 27px; margin-top: 50px; }
  .logo i:nth-child(1) { background: #f3622a; }
  .logo i:nth-child(2) { background: #8bc53f; }
  .logo i:nth-child(3) { background: #00adef; }
  .logo i:nth-child(4) { background: #fec20f; }
  .brand { width: 201px; margin: 48px 0 0 6px; font: 600 22.500px/32px 'Open Sans', sans-serif; letter-spacing: -1.300px; color: #737478; }
  .scope { display: flex; align-items: center; gap: 9px; height: 40px; margin-top: 41px; color: #444; font-size: 16.500px; }
  .scope:not(.current) > :global(svg) { color: #174ae4; margin-top: 2px; }
  .scope.current { margin-left: 48px; padding: 0 13px 7px 11px; gap: 8px; box-sizing: border-box; border-bottom: 4px solid #174ae4; height: 51px; font-weight: 600; margin-top: 42px; padding-bottom: 8px; }
  .account { margin-left: auto; display: flex; align-items: center; height: 52px; margin-top: 39px; font-size: 21px; color: #444; padding-right: 7px; }
  .avatar { width: 48px; height: 48px; border-radius: 50%; background: #efefef; display: flex; align-items: center; justify-content: center; color: #767676; margin: 0 12px; }
  .medal { width: 45px; height: 45px; box-sizing: border-box; border: 3px solid #174ae4; border-radius: 50%; display: flex; align-items: center; justify-content: center; color: #174ae4; margin: 0 47px 4px 14px; position: relative; }
  .medal b { position: absolute; width: 12px; height: 12px; border-radius: 50%; background: #c80000; right: -14px; top: -9px; }
  .burger { width: 30px; display: grid; gap: 6px; margin-bottom: 4px; }
  .burger i { height: 3px; background: #767676; }

  .columns { display: flex; height: 790px; }
  main { width: 1429px; }
  .thread { height: 613px; overflow: hidden; box-sizing: border-box; padding-left: 102px; font-size: 24px; line-height: 42px; mask-image: linear-gradient(#0000 0, #000 42px, #000 565px, #0000 613px); }
  .thread p { margin: -20px 0 17px; }
  ol { margin: 0; padding-left: 36px; width: 1240px; }
  ul { margin: 18px 0 0; padding-left: 36px; list-style: circle; }
  li { margin-top: 6px; }
  ul li:first-child, ol > li:first-child { margin-top: 0; }
  .thread strong { font-weight: 600; }
  .composer { display: flex; margin-top: 18px; padding-left: 48px; gap: 18px; }
  .newtopic { width: 209px; height: 72px; border-radius: 36px; background: linear-gradient(130deg, #2870ea 20%, #1b4aef 78%); color: #fff; display: flex; align-items: center; padding-left: 20px; gap: 20px; font-size: 24px; font-weight: 500; }
  .ask { width: 1105px; height: 135px; box-sizing: border-box; border: 1px solid #ccc; border-radius: 17px; background: #fff; padding: 19px 20px 0 23px; }
  .askrow { display: flex; align-items: center; justify-content: space-between; height: 36px; font-size: 24px; color: #666; }
  .askrow.low { margin-top: 27px; }
  .askrow em { color: #111; padding-left: 3px; }
  .askrow .mic { color: #174ae4; margin-bottom: 7px; }
  .askrow .send { color: #b3b3b3; padding: 0; }
  .count { margin: 0 27px 0 auto; font-size: 21px; }

  aside { width: 372px; position: relative; }
  .sidetabs { display: flex; gap: 24px; height: 82px; box-sizing: border-box; padding-top: 17px; border-bottom: 1px solid #d9d9d9; font-size: 21px; font-weight: 600; line-height: 28px; }
  .sidetabs .on { background: linear-gradient(90deg, #2870ea 20%, #1b4aef 80%) no-repeat 0 32px / 100% 5px; padding-bottom: 9px; height: 28px; border-radius: 0 0 3px 3px; }
  .card { border: 1px solid #d0d0d0; border-radius: 12px; margin-top: 24px; box-sizing: border-box; height: 410px; padding: 6px 0 0; }
  .chat { margin: 0 6px; padding: 0 27px 0 18px; height: 66px; box-sizing: border-box; position: relative; }
  .chat:not(:first-child)::before { content: ''; position: absolute; top: 0; left: 24px; width: 310px; height: 1px; background: #e2e2e2; }
  .chatline { display: flex; align-items: center; height: 66px; }
  .chattitle { flex: 1; white-space: nowrap; overflow: hidden; font-size: 21px; line-height: 30px; color: #1c1c1c; mask-image: linear-gradient(90deg, #000 calc(100% - 50px), transparent); }
  time { font-size: 15px; color: #555; margin-left: 13px; }
  .selected { background: #fff; border-radius: 6px 12px 12px 6px; box-shadow: 0 1px 1px #ddd; }
  .selected::after { content: ''; position: absolute; left: 0; top: 0; width: 5px; height: 66px; border-radius: 5px 0 0 5px; background: linear-gradient(#2870ea 20%, #1b4aef 80%); }
  .acts { display: flex; align-items: center; gap: 18px; }
  .acts :global(svg:last-child) { margin-left: 2px; }
  .seeall { display: flex; align-items: center; height: 67px; margin-top: 6px; border-top: 1px solid #e2e2e2; padding-left: 24px; color: #174ae4; font: 21px 'Liberation Sans', sans-serif; }
  .personal { height: 98px; margin-top: 31px; display: flex; justify-content: space-between; padding: 18px 41px 0 27px; font-size: 21px; line-height: 30px; color: #1c1c1c; }
  .personal span { width: 190px; }
  .personal a { width: 50px; color: #174ae4; text-align: center; font: 21px/24px 'Liberation Sans', sans-serif; padding-top: 3px; }
  .feedback { position: absolute; left: 224px; top: 748px; width: 165px; height: 42px; box-sizing: border-box; border: 1px solid #174ae4; background: #fdfdfd; color: #174ae4; display: flex; align-items: center; gap: 12px; padding-left: 23px; font-size: 19.500px; }
  .feedback span { padding-top: 2px; }
  .feedback :global(svg) { margin-bottom: 5px; }

  .rail { width: 65px; padding: 2px 1px 0 0; display: flex; flex-direction: column; align-items: center; }
  .rail span { height: 60.200px; display: flex; align-items: center; }
  .rail hr { width: 42px; height: 1px; border: 0; margin: 18px 0 17px; background: #6a6a6a; }
  .rail .add { margin-bottom: 256px; }
  .rail hr + span { height: 60px; }
  .rail hr:nth-of-type(2) { margin: 0 0 3px; }

  .taskbar { height: 70px; flex: none; background: #1c1c1c; display: flex; align-items: center; font-size: 18px; box-sizing: border-box; padding-bottom: 2px; }
  .widgets { width: 268px; padding-left: 14px; box-sizing: border-box; position: relative; }
  .widgets svg { display: block; }
  .widgets b, .app b { position: absolute; width: 24px; height: 24px; border-radius: 50%; background: #f58068; color: #111; font-size: 17px; line-height: 24px; text-align: center; font-weight: 400; }
  .widgets b { background: #ff939b; left: 32px; top: -2px; }
  .start { width: 55px; }
  .tasksearch { width: 329px; height: 48px; border-radius: 24px; background: #3a3a3a; border: 1px solid #4c4c4c; box-sizing: border-box; display: flex; align-items: center; padding-left: 17px; color: #ddd; }
  .tasksearch span { margin-left: 15px; flex: 1; font-size: 19px; letter-spacing: .4px; }
  .birds { margin-right: 6px; }
  .apps { display: flex; margin-left: 4px; }
  .app { width: 66px; height: 60px; display: flex; align-items: center; justify-content: center; position: relative; }
  .app b { left: 35px; top: 5px; }
  .app u { position: absolute; left: 28px; bottom: 1px; width: 9px; height: 5px; border-radius: 3px; background: #9b9b9b; }
  .app u.wide { left: 21px; width: 24px; background: #fa8468; }
  .activeapp::before { content: ''; position: absolute; inset: 0 -4px 0 3px; border-radius: 6px; background: #2a2a2a; border: 1px solid #363636; border-right: 8px solid #242424; z-index: 0; }
  .activeapp > :global(*) { z-index: 1; }
  .tray { margin-left: 31px; display: flex; align-items: center; text-align: center; line-height: 24px; }
  .tray > :global(svg:nth-child(2)) { margin-left: 25px; }
  .lang { width: 38px; margin-left: 25px; font-size: 17.500px; letter-spacing: -.3px; }
  .status { display: flex; align-items: center; gap: 12px; margin-left: 26px; width: 98px; }
  .clock { width: 102px; margin: 0 12px 0 14px; text-align: right; font-size: 17.500px; letter-spacing: .1px; white-space: nowrap; }
</style>
